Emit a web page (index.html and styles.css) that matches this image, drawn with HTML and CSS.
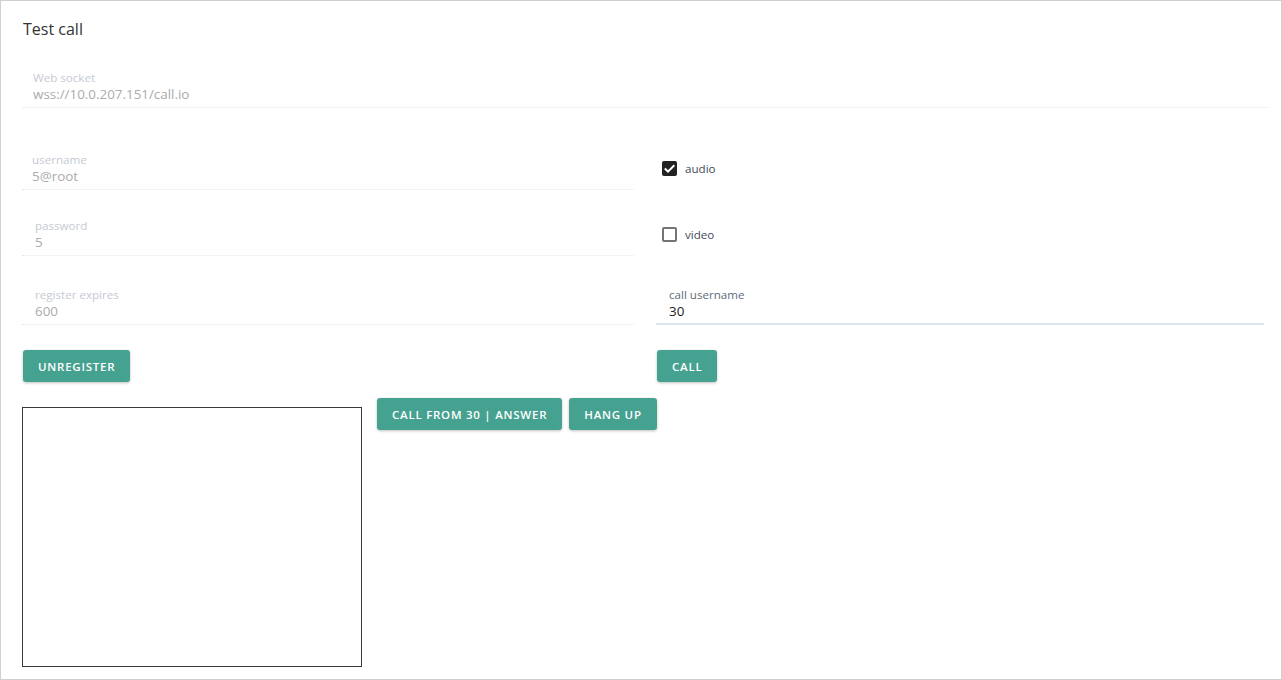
FILE: index.html
```html
<!DOCTYPE html>
<html lang="en">
<head>
<meta charset="utf-8">
<title>Test call</title>
<link rel="stylesheet" href="styles.css">
</head>
<body>
<div class="page">
  <h1 class="title">Test call</h1>

  <div class="field field-ws">
    <div class="label">Web socket</div>
    <div class="value">wss://10.0.207.151/call.io</div>
  </div>

  <div class="form-grid">
    <div class="field field-user">
      <div class="label">username</div>
      <div class="value">5@root</div>
    </div>
    <div class="check-row">
      <span class="box box-on">
        <svg viewBox="0 0 15 15" width="15" height="15"><path d="M2.8 7.6 L6 10.6 L12.3 4.2" fill="none" stroke="#fff" stroke-width="2"/></svg>
      </span>
      <span class="check-text">audio</span>
    </div>

    <div class="field field-inset">
      <div class="label">password</div>
      <div class="value">5</div>
    </div>
    <div class="check-row">
      <span class="box box-off"></span>
      <span class="check-text">video</span>
    </div>

    <div class="field field-inset">
      <div class="label">register expires</div>
      <div class="value">600</div>
    </div>
    <div class="field field-inset field-active">
      <div class="label">call username</div>
      <div class="value">30</div>
    </div>

    <div class="btn-cell"><button class="btn">Unregister</button></div>
    <div class="btn-cell"><button class="btn">Call</button></div>
  </div>

  <div class="media-row">
    <div class="video-box"></div>
    <div class="media-actions">
      <button class="btn">Call from 30 | answer</button>
      <button class="btn">Hang up</button>
    </div>
  </div>
</div>
</body>
</html>
```

FILE: styles.css
```css
html, body {
  margin: 0;
  padding: 0;
  background: #fff;
}

body {
  font-family: "Open Sans", "Liberation Sans", sans-serif;
  color: #333;
}

.page {
  box-sizing: border-box;
  width: 1282px;
  height: 680px;
  border: 1px solid #cfcfcf;
  padding: 0 13px 0 21px;
  overflow: hidden;
}

.title {
  margin: 17px 0 0 1px;
  font-size: 16px;
  line-height: 22px;
  font-weight: 400;
  color: #333;
}

.field {
  box-sizing: border-box;
  padding: 0 10px 4px;
  border-bottom: 1px dotted #e4e6ea;
}

.label {
  font-size: 11.6px;
  line-height: 16px;
  padding-top: 2px;
  margin-bottom: -1px;
  color: #c5cad3;
}

.value {
  font-size: 13.4px;
  line-height: 18px;
  color: #ababab;
}

.field-ws {
  margin-top: 28px;
  margin-left: 1px;
}

.form-grid {
  display: grid;
  grid-template-columns: 612px 608px;
  grid-template-rows: 45px 66px 69px auto;
  column-gap: 22px;
  align-items: end;
  margin-top: 37px;
}

.field-inset {
  padding-left: 13px;
}

.field-active {
  border-bottom: 2px solid #e1e6ec;
  padding-bottom: 3px;
}

.field-active .label {
  color: #5f6b7a;
}

.field-active .value {
  color: #222;
}

.check-row {
  display: flex;
  align-items: center;
  gap: 8px;
  padding-left: 6px;
  height: 18px;
  margin-bottom: 13px;
}

.box {
  box-sizing: border-box;
  width: 15px;
  height: 15px;
  border-radius: 2px;
  display: flex;
  align-items: center;
  justify-content: center;
}

.box svg {
  display: block;
  width: 15px;
  height: 15px;
}

.box-on {
  background: #222;
}

.box-off {
  border: 2px solid #757575;
}

.check-text {
  font-size: 11.6px;
  color: #3f4a58;
}

.btn-cell {
  padding-top: 25px;
  padding-left: 1px;
}

.btn {
  height: 32px;
  padding: 0 15px;
  border: none;
  border-radius: 3px;
  background: #45a190;
  color: #fff;
  font-family: "Open Sans", "Liberation Sans", sans-serif;
  font-size: 11.5px;
  font-weight: 600;
  letter-spacing: 0.75px;
  text-transform: uppercase;
  box-shadow: 0 1px 3px rgba(0, 0, 0, 0.25);
  cursor: pointer;
}

.media-row {
  display: flex;
  align-items: flex-start;
  gap: 15px;
  margin-top: 16px;
}

.video-box {
  box-sizing: border-box;
  width: 340px;
  height: 260px;
  margin-top: 9px;
  border: 1px solid #3a3a3a;
}

.media-actions {
  display: flex;
  gap: 7px;
}
```
